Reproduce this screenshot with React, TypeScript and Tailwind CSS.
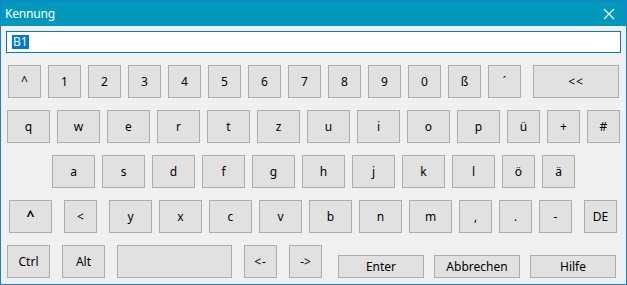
import React from 'react';

type KeyProps = {
  label?: string;
  w?: string;
  className?: string;
};

// single keyboard key, windows-style button
function Key({ label = '', w = 'w-[33px]', className = '' }: KeyProps) {
  return (
    <div
      className={`${w} h-[33px] shrink-0 flex items-center justify-center border border-[#adadad] bg-[#e1e1e1] text-[12px] text-black leading-none ${className}`}
    >
      {label}
    </div>
  );
}

const wide = 'w-[43px]';

export default function App() {
  return (
    <div
      className="w-[627px] h-[285px] flex flex-col border border-[#1a7fcc] bg-[#f0f0f0] select-none"
      style={{ fontFamily: '"Noto Sans", "Liberation Sans", sans-serif' }}
    >
      {/* title bar */}
      <div className="h-[25px] shrink-0 bg-[#0099bc] flex items-center justify-between pl-[4px] pr-[11px]">
        <span className="text-white text-[12px] leading-none tracking-[-0.2px]">Kennung</span>
        <svg width="12" height="12" viewBox="0 0 12 12" className="mt-[1px]">
          <path d="M1 1 L11 11 M11 1 L1 11" stroke="#ffffff" strokeWidth="1.1" fill="none" />
        </svg>
      </div>

      {/* input */}
      <div className="mt-[5px] ml-[5px] w-[615px] h-[22px] border border-[#0078d7] bg-white flex items-center pl-[5px]">
        <span className="bg-[#0078d7] text-white text-[12px] leading-[14px] px-[1px]">B1</span>
      </div>

      {/* row 1 */}
      <div className="mt-[12px] ml-[7px] flex gap-[7px]">
        <Key label="^" className="items-start pt-[9px] text-[11px]" />
        {['1', '2', '3', '4', '5', '6', '7', '8', '9', '0', 'ß', '´'].map((k) => (
          <Key key={k} label={k} />
        ))}
        <Key label="<<" w="w-[86px]" className="ml-[5px] tracking-[1px]" />
      </div>

      {/* row 2 */}
      <div className="mt-[12px] ml-[6px] flex gap-[7px]">
        {['q', 'w', 'e', 'r', 't', 'z', 'u', 'i', 'o', 'p'].map((k) => (
          <Key key={k} label={k} w={wide} />
        ))}
        <Key label="ü" />
        <Key label="+" />
        <Key label="#" />
      </div>

      {/* row 3 */}
      <div className="mt-[12px] ml-[51px] flex gap-[7px]">
        {['a', 's', 'd', 'f', 'g', 'h', 'j', 'k', 'l'].map((k) => (
          <Key key={k} label={k} w={wide} />
        ))}
        <Key label="ö" />
        <Key label="ä" />
      </div>

      {/* row 4 */}
      <div className="mt-[12px] ml-[8px] flex gap-[7px]">
        <Key label="^" w={wide} className="items-start pt-[8px] font-bold text-[14px]" />
        <Key label="<" className="ml-[5px]" />
        <Key label="y" w={wide} className="ml-[5px]" />
        {['x', 'c', 'v', 'b', 'n', 'm'].map((k) => (
          <Key key={k} label={k} w={wide} />
        ))}
        <Key label="," />
        <Key label="." />
        <Key label="-" />
        <Key label="DE" className="ml-[5px]" />
      </div>

      {/* row 5 */}
      <div className="mt-[12px] ml-[6px] flex items-end gap-[12px]">
        <Key label="Ctrl" w={wide} />
        <Key label="Alt" w={wide} />
        <Key w="w-[115px]" />
        <Key label="<-" className="tracking-[1px]" />
        <Key label="->" />
        <div className="ml-[4px] flex gap-[10px]">
          <Key label="Enter" w="w-[86px]" className="!h-[23px]" />
          <Key label="Abbrechen" w="w-[86px]" className="!h-[23px]" />
          <Key label="Hilfe" w="w-[86px]" className="!h-[23px]" />
        </div>
      </div>
    </div>
  );
}
